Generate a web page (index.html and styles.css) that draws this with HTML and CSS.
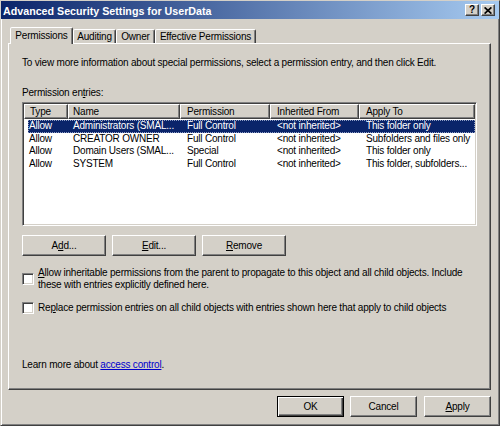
FILE: index.html
```html
<!DOCTYPE html>
<html>
<head>
<meta charset="utf-8">
<title>Advanced Security Settings for UserData</title>
<link rel="stylesheet" href="styles.css">
</head>
<body>
<div class="window">
  <div class="titlebar">
    <span class="title">Advanced Security Settings for UserData</span>
    <div class="caption-btns">
      <span class="cbtn help">?</span>
      <span class="cbtn close"><svg width="8" height="7" viewBox="0 0 8 7"><path d="M0.6 0.4 L7.4 6.6 M7.4 0.4 L0.6 6.6" stroke="#000" stroke-width="1.7" fill="none"/></svg></span>
    </div>
  </div>

  <div class="tabs">
    <div class="tab active w1">Permissions</div>
    <div class="tab w2">Auditing</div>
    <div class="tab w3">Owner</div>
    <div class="tab w4">Effective Permissions</div>
  </div>

  <div class="panel">
    <p class="intro">To view more information about special permissions, select a permission entry, and then click Edit.</p>
    <div class="label">Permission en<u>t</u>ries:</div>

    <div class="listbox">
      <div class="lv-head">
        <div class="hc h1">Type</div>
        <div class="hc h2">Name</div>
        <div class="hc h3">Permission</div>
        <div class="hc h3">Inherited From</div>
        <div class="hc h3">Apply To</div>
      </div>
      <div class="lv-body">
        <div class="lv-row sel">
          <span class="r1">Allow</span><span class="r2">Administrators (SMAL...</span><span class="r3">Full Control</span><span class="r3">&lt;not inherited&gt;</span><span class="r3">This folder only</span>
        </div>
        <div class="lv-row">
          <span class="r1">Allow</span><span class="r2">CREATOR OWNER</span><span class="r3">Full Control</span><span class="r3">&lt;not inherited&gt;</span><span class="r3">Subfolders and files only</span>
        </div>
        <div class="lv-row">
          <span class="r1">Allow</span><span class="r2">Domain Users (SMAL...</span><span class="r3">Special</span><span class="r3">&lt;not inherited&gt;</span><span class="r3">This folder only</span>
        </div>
        <div class="lv-row">
          <span class="r1">Allow</span><span class="r2">SYSTEM</span><span class="r3">Full Control</span><span class="r3">&lt;not inherited&gt;</span><span class="r3">This folder, subfolders...</span>
        </div>
      </div>
    </div>

    <div class="btnrow">
      <div class="btn">A<u>d</u>d...</div>
      <div class="btn"><u>E</u>dit...</div>
      <div class="btn"><u>R</u>emove</div>
    </div>

    <div class="check check1">
      <span class="box"></span>
      <span class="ctext"><u>A</u>llow inheritable permissions from the parent to propagate to this object and all child objects. Include<br>these with entries explicitly defined here.</span>
    </div>

    <div class="check check2">
      <span class="box"></span>
      <span class="ctext">Re<u>p</u>lace permission entries on all child objects with entries shown here that apply to child objects</span>
    </div>

    <div class="learn">Learn more about <a href="#">access control</a>.</div>
  </div>

  <div class="footer">
    <div class="fbtn ok">OK</div>
    <div class="fbtn cancel">Cancel</div>
    <div class="fbtn"><u>A</u>pply</div>
  </div>
</div>
</body>
</html>
```

FILE: styles.css
```css
html, body {
  margin: 0;
  padding: 0;
  background: #d4d0c8;
}

body {
  font-family: "Liberation Sans", Arial, sans-serif;
  font-size: 10px;
  letter-spacing: -0.2px;
  color: #000;
}

.window {
  width: 500px;
  height: 426px;
  box-sizing: border-box;
  border: 1px solid;
  border-color: #d4d0c8 #404040 #404040 #d4d0c8;
  box-shadow: inset 1px 1px #fff, inset -1px -1px #808080;
  background: #d4d0c8;
  overflow: hidden;
}

/* title bar */
.titlebar {
  height: 18px;
  box-sizing: border-box;
  display: flex;
  align-items: center;
  justify-content: space-between;
  padding: 0 4px 0 2px;
  background: linear-gradient(to right, #0a246a, #a6caf0);
}

.title {
  color: #fff;
  font-weight: bold;
  font-size: 10.7px;
  letter-spacing: 0;
  line-height: 16px;
  padding-top: 2px;
  white-space: nowrap;
}

.caption-btns {
  display: flex;
  gap: 2px;
}

.cbtn {
  width: 14px;
  height: 12px;
  box-sizing: border-box;
  background: #d4d0c8;
  border: 1px solid;
  border-color: #fff #404040 #404040 #fff;
  box-shadow: inset -1px -1px #808080;
  display: flex;
  align-items: center;
  justify-content: center;
}

.help {
  font-weight: bold;
  font-size: 10px;
  line-height: 10px;
  letter-spacing: 0;
}

/* tabs */
.tabs {
  display: flex;
  align-items: flex-end;
  height: 16px;
  margin: 8px 0 0 9px;
}

.tab {
  height: 14px;
  box-sizing: border-box;
  border: 1px solid;
  border-bottom: none;
  border-color: #fff #404040 transparent #fff;
  border-radius: 2px 2px 0 0;
  box-shadow: inset -1px 0 #808080;
  background: #d4d0c8;
  text-align: center;
  line-height: 13px;
  white-space: nowrap;
}

.tab.active {
  height: 17px;
  margin-bottom: -1px;
  padding-top: 1px;
  position: relative;
  z-index: 1;
}

.w1 { width: 63px; }
.w2 { width: 43px; }
.w3 { width: 39px; }
.w4 { width: 101px; }

/* panel */
.panel {
  margin-left: 7px;
  width: 483px;
  height: 347px;
  box-sizing: border-box;
  border: 1px solid;
  border-color: #fff #404040 #404040 #fff;
  box-shadow: inset -1px -1px #808080;
  padding: 13px 13px 0 13px;
}

.intro {
  margin: 0;
  line-height: 12px;
  white-space: nowrap;
}

.label {
  margin-top: 18px;
  line-height: 12px;
}

/* list view */
.listbox {
  margin-top: 3px;
  height: 124px;
  box-sizing: border-box;
  border: 1px solid;
  border-color: #808080 #fff #fff #808080;
  box-shadow: inset 1px 1px #404040, inset -1px -1px #d4d0c8;
  background: #fff;
  padding: 1px;
}

.lv-head {
  display: grid;
  grid-template-columns: 44px 112px 90px 89px 116px;
}

.hc {
  height: 15px;
  box-sizing: border-box;
  background: #d4d0c8;
  border: 1px solid;
  border-color: #fff #404040 #404040 #fff;
  box-shadow: inset -1px -1px #808080;
  line-height: 13px;
  white-space: nowrap;
  overflow: hidden;
}

.h1 { padding-left: 5px; }
.h2 { padding-left: 4px; }
.h3 { padding-left: 6px; }

.lv-body {
  padding-top: 1px;
}

.lv-row {
  display: grid;
  grid-template-columns: 40px 112px 90px 89px 116px;
  margin-left: 4px;
  height: 12.5px;
  line-height: 12.5px;
  white-space: nowrap;
}

.lv-row span {
  overflow: hidden;
}

.r1 { padding-left: 1px; }
.r2 { padding-left: 5px; }
.r3 { padding-left: 7px; }

.lv-row.sel {
  background: #0a246a;
  color: #fff;
  outline: 1px dotted #8d9cc4;
  outline-offset: -1px;
}

/* buttons */
.btnrow {
  display: flex;
  gap: 6px;
  margin-top: 9px;
}

.btn, .fbtn {
  height: 21px;
  box-sizing: border-box;
  background: #d4d0c8;
  border: 1px solid;
  border-color: #fff #404040 #404040 #fff;
  box-shadow: inset -1px -1px #808080;
  display: flex;
  align-items: center;
  justify-content: center;
  white-space: nowrap;
}

.btn {
  width: 84px;
}

/* checkboxes */
.check {
  display: flex;
  align-items: center;
  gap: 4px;
  line-height: 12px;
}

.check1 { margin-top: 10.5px; }
.check2 { margin-top: 11px; }

.ctext {
  white-space: nowrap;
}

.box {
  flex: none;
  width: 12px;
  height: 12px;
  box-sizing: border-box;
  background: #fff;
  border: 1px solid;
  border-color: #808080 #fff #fff #808080;
  box-shadow: inset 1px 1px #404040, inset -1px -1px #d4d0c8;
}

.learn {
  margin-top: 45px;
  line-height: 12px;
}

.learn a {
  color: #0000cc;
  text-decoration: underline;
}

/* footer */
.footer {
  display: flex;
  justify-content: flex-end;
  gap: 6px;
  padding: 6px 8px 0 0;
}

.fbtn {
  width: 67px;
}

.cancel {
  margin-right: 1px;
}

.fbtn.ok {
  border: 1px solid #000;
  box-shadow: inset 1px 1px #fff, inset -1px -1px #404040, inset -2px -2px #808080;
}
```
